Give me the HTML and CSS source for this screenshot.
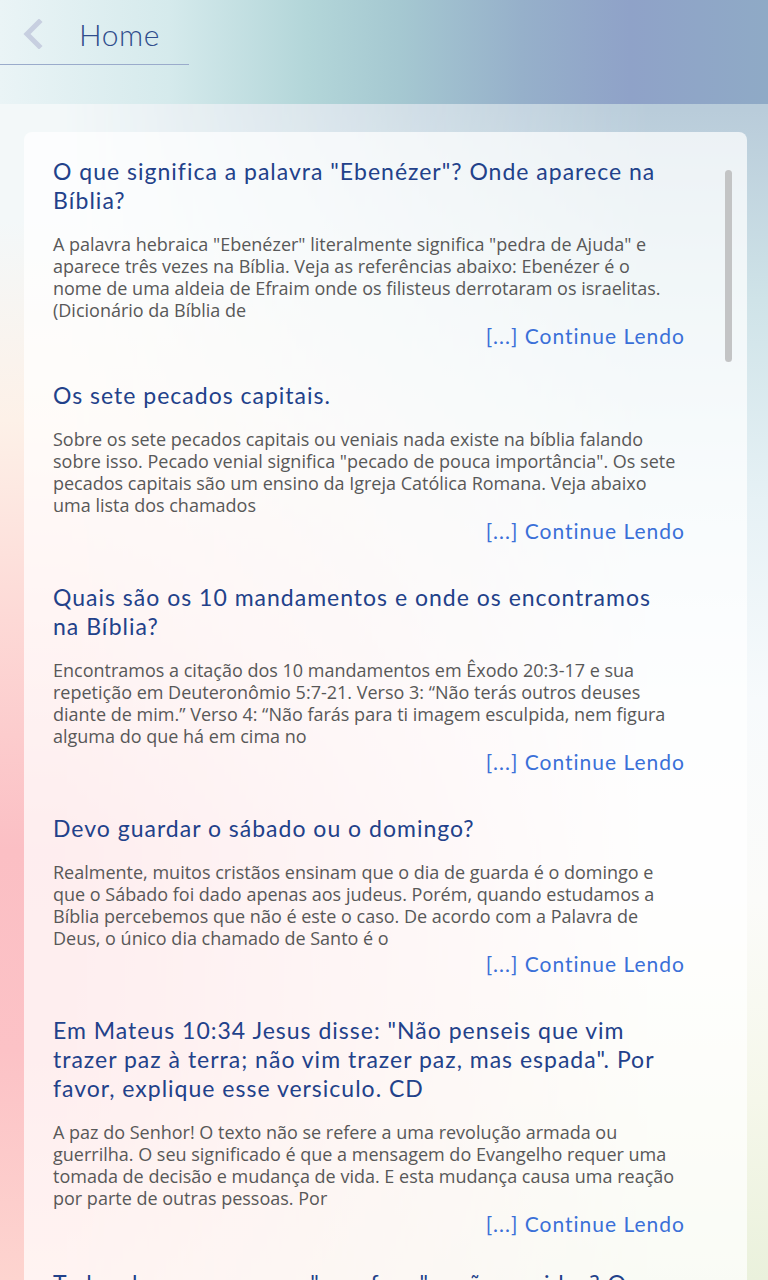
FILE: index.html
```html
<!DOCTYPE html>
<html lang="pt">
<head>
<meta charset="utf-8">
<title>Home</title>
<link rel="stylesheet" href="styles.css">
</head>
<body>
<div class="app">
  <header class="header">
    <div class="nav">
      <svg class="back" width="22" height="30" viewBox="0 0 22 30" aria-hidden="true">
        <path d="M17 3 L5 15 L17 27" fill="none" stroke="#c7cfe0" stroke-width="5" stroke-linecap="square" stroke-linejoin="miter"/>
      </svg>
      <span class="nav-title">Home</span>
    </div>
  </header>
  <main class="content">
    <section class="card">
      <div class="scrollbar"></div>
      <article class="post">
        <h2 class="post-title">O que significa a palavra "Ebenézer"? Onde aparece na<br>Bíblia?</h2>
        <p class="post-excerpt">A palavra hebraica "Ebenézer" literalmente significa "pedra de Ajuda" e<br>aparece três vezes na Bíblia. Veja as referências abaixo: Ebenézer é o<br>nome de uma aldeia de Efraim onde os filisteus derrotaram os israelitas.<br>(Dicionário da Bíblia de</p>
        <div class="post-more">[...] Continue Lendo</div>
      </article>
      <article class="post">
        <h2 class="post-title">Os sete pecados capitais.</h2>
        <p class="post-excerpt">Sobre os sete pecados capitais ou veniais nada existe na bíblia falando<br>sobre isso. Pecado venial significa "pecado de pouca importância". Os sete<br>pecados capitais são um ensino da Igreja Católica Romana. Veja abaixo<br>uma lista dos chamados</p>
        <div class="post-more">[...] Continue Lendo</div>
      </article>
      <article class="post">
        <h2 class="post-title">Quais são os 10 mandamentos e onde os encontramos<br>na Bíblia?</h2>
        <p class="post-excerpt">Encontramos a citação dos 10 mandamentos em Êxodo 20:3-17 e sua<br>repetição em Deuteronômio 5:7-21. Verso 3: “Não terás outros deuses<br>diante de mim.” Verso 4: “Não farás para ti imagem esculpida, nem figura<br>alguma do que há em cima no</p>
        <div class="post-more">[...] Continue Lendo</div>
      </article>
      <article class="post">
        <h2 class="post-title">Devo guardar o sábado ou o domingo?</h2>
        <p class="post-excerpt">Realmente, muitos cristãos ensinam que o dia de guarda é o domingo e<br>que o Sábado foi dado apenas aos judeus. Porém, quando estudamos a<br>Bíblia percebemos que não é este o caso. De acordo com a Palavra de<br>Deus, o único dia chamado de Santo é o</p>
        <div class="post-more">[...] Continue Lendo</div>
      </article>
      <article class="post post-tight">
        <h2 class="post-title">Em Mateus 10:34 Jesus disse: "Não penseis que vim<br>trazer paz à terra; não vim trazer paz, mas espada". Por<br>favor, explique esse versiculo. CD</h2>
        <p class="post-excerpt">A paz do Senhor! O texto não se refere a uma revolução armada ou<br>guerrilha. O seu significado é que a mensagem do Evangelho requer uma<br>tomada de decisão e mudança de vida. E esta mudança causa uma reação<br>por parte de outras pessoas. Por</p>
        <div class="post-more">[...] Continue Lendo</div>
      </article>
      <article class="post">
        <h2 class="post-title">Todos dos que morrem "sem fogo" serão punidos? O</h2>
      </article>
    </section>
  </main>
</div>
</body>
</html>
```

FILE: styles.css
```css
html, body {
  margin: 0;
  padding: 0;
}
body {
  width: 768px;
  height: 1280px;
  overflow: hidden;
  font-family: "Open Sans", "Liberation Sans", sans-serif;
}
.app {
  position: relative;
  width: 768px;
  height: 1280px;
  overflow: hidden;
  background: linear-gradient(to bottom, #b7cad9 0, #b9ccda 110px, #cfe3e8 300px, #e6f1f5 500px, #f7fafc 700px, #fbfbf9 900px, #f5f7ea 1100px, #eaf1dc 1280px);
}
.app::before {
  content: "";
  position: absolute;
  inset: 0;
  background: linear-gradient(to bottom, #f3f8f9 0, #f3f8f9 220px, #fdf1e8 420px, #fdd9d6 620px, #fbbfc4 850px, #fcc2c6 1050px, #fdd4cf 1280px);
  -webkit-mask-image: linear-gradient(to right, #000 0, #000 8%, rgba(0,0,0,0.6) 40%, transparent 85%);
  mask-image: linear-gradient(to right, #000 0, #000 8%, rgba(0,0,0,0.6) 40%, transparent 85%);
}
.header {
  position: relative;
  height: 104px;
  background: linear-gradient(to right, #eaf4f6 0%, #d5eaec 22%, #b3d6d9 40%, #a5c8d1 52%, #96b0ca 68%, #8fa2c8 82%, #8faac6 100%);
}
.nav {
  display: flex;
  align-items: center;
  width: 189px;
  height: 65px;
  box-sizing: border-box;
  padding-left: 22px;
  border-bottom: 1px solid #9aabcb;
}
.back {
  display: block;
  margin-top: 3px;
}
.nav-title {
  margin-left: 35px;
  margin-top: 4px;
  font-family: "Lato", "Liberation Sans", sans-serif;
  font-weight: 300;
  font-size: 30px;
  color: #2f4d8c;
  letter-spacing: 0.6px;
}
.content {
  position: relative;
  padding: 28px 21px 0 24px;
}
.card {
  position: relative;
  background: rgba(255, 255, 255, 0.72);
  border-radius: 8px 8px 0 0;
  padding: 25px 62px 0 29px;
  min-height: 1200px;
}
.scrollbar {
  position: absolute;
  left: 701px;
  top: 38px;
  width: 7px;
  height: 192px;
  border-radius: 4px;
  background: #c3c4c5;
}
.post {
  margin-bottom: 38px;
}
.post:first-of-type,
.post-tight {
  margin-bottom: 31px;
}
.post-title {
  margin: 0 0 18px;
  font-family: "Lato", "Liberation Sans", sans-serif;
  font-weight: 400;
  font-size: 23px;
  line-height: 29px;
  letter-spacing: 1px;
  color: #22418a;
  white-space: nowrap;
}
.post-excerpt {
  margin: 0;
  font-size: 18px;
  line-height: 22px;
  color: #585858;
  white-space: nowrap;
}
.post-more {
  text-align: right;
  font-family: "Lato", "Liberation Sans", sans-serif;
  font-weight: 400;
  font-size: 21px;
  line-height: 29px;
  letter-spacing: 1px;
  color: #3a70d8;
}
```
